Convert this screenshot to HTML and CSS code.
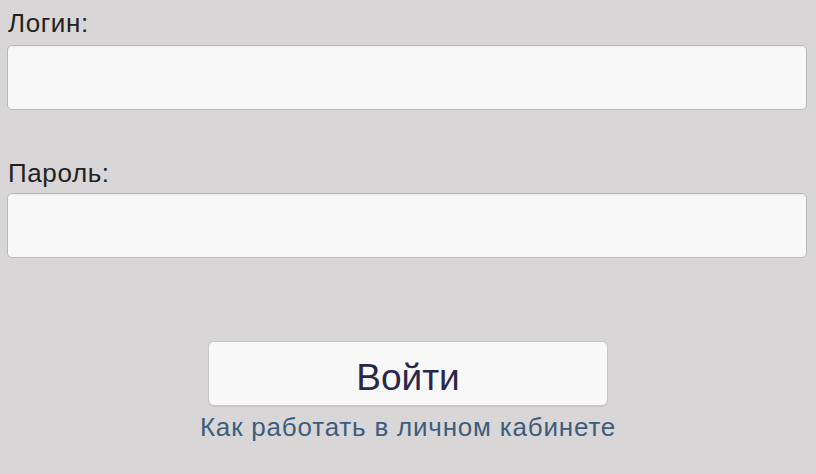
FILE: index.html
```html
<!DOCTYPE html>
<html lang="ru">
<head>
<meta charset="utf-8">
<link rel="stylesheet" href="styles.css">
</head>
<body>
<form class="login">
  <label class="field-label" for="login">Логин:</label>
  <input class="field" id="login" type="text">
  <label class="field-label field-label--second" for="pass">Пароль:</label>
  <input class="field" id="pass" type="password">
  <div class="actions">
    <button class="btn" type="button">Войти</button>
    <a class="help" href="#">Как работать в личном кабинете</a>
  </div>
</form>
</body>
</html>
```

FILE: styles.css
```css
html, body {
  margin: 0;
  padding: 0;
  background: #d8d6d6;
}
body {
  width: 816px;
  height: 474px;
  overflow: hidden;
  font-family: "Liberation Sans", Arial, sans-serif;
}
.login {
  display: flex;
  flex-direction: column;
  padding: 8px 9px 0 7px;
}
.field-label {
  display: block;
  font-size: 26px;
  line-height: 30px;
  letter-spacing: 0.6px;
  color: #222;
  padding-left: 1px;
  margin-bottom: 7px;
}
.field-label--second {
  margin-top: 48px;
  margin-bottom: 5px;
}
.field {
  box-sizing: border-box;
  width: 800px;
  height: 65px;
  margin: 0;
  border: 1px solid #b9b9b9;
  border-radius: 5px;
  background: #f8f8f8;
  box-shadow: inset 0 1px 1px rgba(0,0,0,0.06);
  outline: none;
}
.actions {
  display: flex;
  flex-direction: column;
  align-items: center;
  margin-top: 83px;
  padding-left: 2px;
}
.btn {
  box-sizing: border-box;
  width: 400px;
  height: 65px;
  border: 1px solid #c6c6c6;
  border-radius: 6px;
  background: #f8f8f8;
  box-shadow: 0 1px 1px rgba(0,0,0,0.08);
  font-family: "Liberation Sans", Arial, sans-serif;
  font-size: 37px;
  color: #29284a;
  padding: 9px 0 0;
  cursor: pointer;
}
.help {
  margin-top: 6px;
  font-size: 26px;
  line-height: 30px;
  letter-spacing: 0.8px;
  color: #3e5d7d;
  text-decoration: none;
}
```
